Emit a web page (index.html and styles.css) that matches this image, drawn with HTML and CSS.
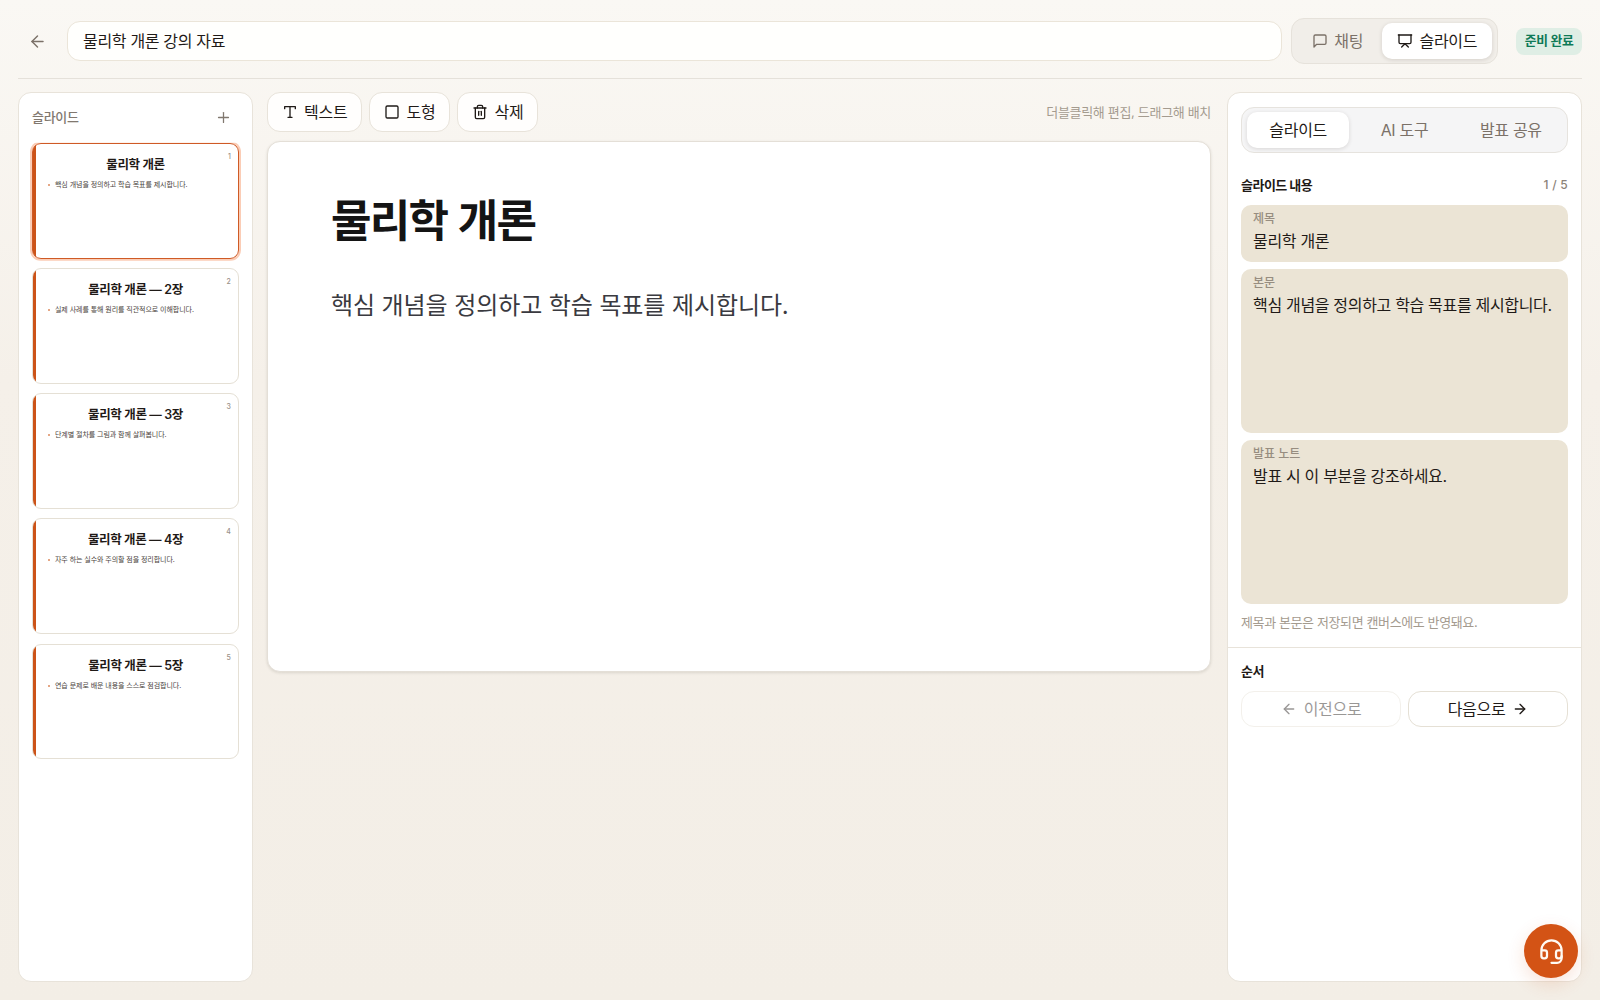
FILE: index.html
```html
<!DOCTYPE html>
<html lang="ko">
<head>
  <meta charset="UTF-8">
  <meta name="viewport" content="width=device-width, initial-scale=1.0">
  <link rel="stylesheet" href="styles.css">
  <title>물리학 개론 강의 자료</title>
</head>
<body>
<header class="topbar">
  <button class="back" aria-label="뒤로">
    <svg class="icon" viewBox="0 0 24 24"><path d="m12 19-7-7 7-7"/><path d="M19 12H5"/></svg>
  </button>
  <div class="doc-title">물리학 개론 강의 자료</div>
  <div class="switch">
    <button class="switch-item">
      <svg class="icon" viewBox="0 0 24 24"><path d="M21 15a2 2 0 0 1-2 2H7l-4 4V5a2 2 0 0 1 2-2h14a2 2 0 0 1 2 2z"/></svg>
      <span class="label">채팅</span>
    </button>
    <button class="switch-item active">
      <svg class="icon" viewBox="0 0 24 24"><path d="M2 3h20"/><path d="M21 3v11a2 2 0 0 1-2 2H5a2 2 0 0 1-2-2V3"/><path d="m7 21 5-5 5 5"/></svg>
      <span class="label">슬라이드</span>
    </button>
  </div>
  <span class="badge">준비 완료</span>
</header>

<main class="workspace">
  <aside class="panel slides">
    <div class="slides-head">
      <span class="label">슬라이드</span>
      <svg class="icon" viewBox="0 0 24 24"><path d="M5 12h14"/><path d="M12 5v14"/></svg>
    </div>
    <div class="thumb selected">
      <span class="thumb-num">1</span>
      <div class="thumb-title">물리학 개론</div>
      <div class="thumb-text">핵심 개념을 정의하고 학습 목표를 제시합니다.</div>
    </div>
    <div class="thumb">
      <span class="thumb-num">2</span>
      <div class="thumb-title">물리학 개론 — 2장</div>
      <div class="thumb-text">실제 사례를 통해 원리를 직관적으로 이해합니다.</div>
    </div>
    <div class="thumb">
      <span class="thumb-num">3</span>
      <div class="thumb-title">물리학 개론 — 3장</div>
      <div class="thumb-text">단계별 절차를 그림과 함께 살펴봅니다.</div>
    </div>
    <div class="thumb">
      <span class="thumb-num">4</span>
      <div class="thumb-title">물리학 개론 — 4장</div>
      <div class="thumb-text">자주 하는 실수와 주의할 점을 정리합니다.</div>
    </div>
    <div class="thumb">
      <span class="thumb-num">5</span>
      <div class="thumb-title">물리학 개론 — 5장</div>
      <div class="thumb-text">연습 문제로 배운 내용을 스스로 점검합니다.</div>
    </div>
  </aside>

  <section class="editor">
    <div class="toolbar">
      <button class="tool">
        <svg class="icon" viewBox="0 0 24 24"><path d="M4 7V4h16v3"/><path d="M9 20h6"/><path d="M12 4v16"/></svg>
        <span class="label">텍스트</span>
      </button>
      <button class="tool">
        <svg class="icon" viewBox="0 0 24 24"><rect x="3" y="3" width="18" height="18" rx="2"/></svg>
        <span class="label">도형</span>
      </button>
      <button class="tool">
        <svg class="icon" viewBox="0 0 24 24"><path d="M3 6h18"/><path d="M19 6v14a2 2 0 0 1-2 2H7a2 2 0 0 1-2-2V6"/><path d="M8 6V4a2 2 0 0 1 2-2h4a2 2 0 0 1 2 2v2"/><path d="M10 11v6"/><path d="M14 11v6"/></svg>
        <span class="label">삭제</span>
      </button>
      <span class="hint">더블클릭해 편집, 드래그해 배치</span>
    </div>
    <div class="canvas">
      <h1 class="canvas-title">물리학 개론</h1>
      <p class="canvas-text">핵심 개념을 정의하고 학습 목표를 제시합니다.</p>
    </div>
  </section>

  <aside class="panel inspector">
    <div class="tabs">
      <button class="tab active"><span class="label">슬라이드</span></button>
      <button class="tab"><span class="label">AI 도구</span></button>
      <button class="tab"><span class="label">발표 공유</span></button>
    </div>
    <div class="section-head">
      <h2 class="section-title">슬라이드 내용</h2>
      <span class="count">1 / 5</span>
    </div>
    <div class="fields">
      <div class="field">
        <div class="field-label">제목</div>
        <div class="field-value">물리학 개론</div>
      </div>
      <div class="field tall">
        <div class="field-label">본문</div>
        <div class="field-value">핵심 개념을 정의하고 학습 목표를 제시합니다.</div>
      </div>
      <div class="field tall">
        <div class="field-label">발표 노트</div>
        <div class="field-value">발표 시 이 부분을 강조하세요.</div>
      </div>
    </div>
    <p class="note">제목과 본문은 저장되면 캔버스에도 반영돼요.</p>
    <div class="order">
      <h2 class="section-title">순서</h2>
      <div class="order-row">
        <button class="move" disabled>
          <svg class="icon" viewBox="0 0 24 24"><path d="m12 19-7-7 7-7"/><path d="M19 12H5"/></svg>
          <span class="label">이전으로</span>
        </button>
        <button class="move">
          <span class="label">다음으로</span>
          <svg class="icon" viewBox="0 0 24 24"><path d="M5 12h14"/><path d="m12 5 7 7-7 7"/></svg>
        </button>
      </div>
    </div>
  </aside>
</main>

<button class="support" aria-label="문의">
  <svg class="icon" viewBox="0 0 24 24"><path d="M3 11h3a2 2 0 0 1 2 2v3a2 2 0 0 1-2 2H5a2 2 0 0 1-2-2v-5a9 9 0 0 1 18 0v5a2 2 0 0 1-2 2h-1a2 2 0 0 1-2-2v-3a2 2 0 0 1 2-2h3"/><path d="M21 16v2a4 4 0 0 1-4 4h-5"/></svg>
</button>
</body>
</html>
```

FILE: styles.css
```css
* {
  box-sizing: border-box;
}
body {
  margin: 0;
  height: 100vh;
  padding: 18px;
  display: flex;
  flex-direction: column;
  overflow: hidden;
  font-family: Inter, "Noto Sans CJK KR", sans-serif;
  font-size: 16px;
  letter-spacing: -0.02em;
  color: #1f1a17;
  background: linear-gradient(180deg, #faf8f4 0%, #f5f0e9 38%, #f3eee6 100%);
}
button {
  font: inherit;
  letter-spacing: inherit;
  color: inherit;
  background: none;
  border: none;
  padding: 0;
  display: flex;
  align-items: center;
  justify-content: center;
}
h1, h2, p {
  margin: 0;
}
.icon {
  width: 16px;
  height: 16px;
  flex: none;
  fill: none;
  stroke: currentColor;
  stroke-width: 2;
  stroke-linecap: round;
  stroke-linejoin: round;
}
.label {
  padding-bottom: 2px;
}

/* top bar */
.topbar {
  display: flex;
  align-items: center;
  height: 61px;
  flex: none;
  padding-bottom: 14px;
  border-bottom: 1px solid #e5e1da;
}
.back {
  width: 39px;
  height: 40px;
  margin-right: 10px;
  color: #7b7168;
}
.back .icon {
  width: 19px;
  height: 19px;
  stroke-width: 1.8;
}
.doc-title {
  flex: 1;
  height: 40px;
  line-height: 38px;
  padding: 0 15px;
  border: 1px solid #ebe5d9;
  border-radius: 13px;
  background: #fffffd;
}
.switch {
  display: flex;
  gap: 4px;
  height: 46px;
  margin-left: 9px;
  padding: 4px 5px;
  border: 1px solid #e6e2db;
  border-radius: 13px;
  background: #f1eee9;
}
.switch-item {
  gap: 6px;
  padding: 0 15.2px;
  border-radius: 10px;
  color: #7b7168;
}
.switch-item.active {
  color: #1f1a17;
  background: #fff;
  box-shadow: 0 1px 4px rgba(40, 30, 20, 0.14);
}
.badge {
  margin-left: 18px;
  height: 27px;
  line-height: 26px;
  padding: 0 8.5px;
  border-radius: 8px;
  font-size: 12.8px;
  font-weight: 600;
  color: #0f7a57;
  background: #dfeee5;
}

/* layout */
.workspace {
  flex: 1;
  min-height: 0;
  display: grid;
  grid-template-columns: 235px 944px 355px;
  column-gap: 14px;
  margin-top: 13px;
}
.panel {
  border: 1px solid #e8e3da;
  border-radius: 13px;
  background: #fff;
}

/* slide list */
.slides {
  display: flex;
  flex-direction: column;
  gap: 9.3px;
  padding: 13px;
}
.slides-head {
  display: flex;
  align-items: center;
  justify-content: space-between;
  height: 22px;
  margin-bottom: 5.5px;
  padding-right: 7px;
  font-size: 13px;
  font-weight: 500;
  color: #81786f;
}
.slides-head .icon {
  width: 17px;
  height: 17px;
  stroke-width: 1.8;
}
.thumb {
  position: relative;
  height: 115.9px;
  padding: 11px 15px;
  border: 1px solid #e5e0d5;
  border-radius: 9px;
  background: linear-gradient(90deg, #cc5318 3px, #fff 3px);
}
.thumb.selected {
  border-color: #cf5a26;
  box-shadow: 0 0 0 2px #fbcdb6;
  clip-path: inset(0 -2px -2px -2px);
}
.thumb-num {
  position: absolute;
  top: 8px;
  right: 7.5px;
  font-size: 7px;
  line-height: 9px;
  font-weight: 500;
  color: #9a9188;
}
.thumb-title {
  font-size: 12.5px;
  line-height: 19px;
  letter-spacing: -0.03em;
  font-weight: 600;
  text-align: center;
}
.thumb-text {
  display: flex;
  align-items: center;
  gap: 5px;
  margin-top: 5px;
  font-size: 7px;
  line-height: 12px;
  letter-spacing: -0.01em;
  color: #4a433d;
}
.thumb-text::before {
  content: "";
  width: 2px;
  height: 2px;
  border-radius: 50%;
  background: #dd8a5c;
}

/* editor */
.toolbar {
  display: flex;
  align-items: center;
  gap: 7px;
  height: 40px;
}
.tool {
  gap: 6px;
  height: 40px;
  padding: 0 14.1px;
  border: 1px solid #e8e3da;
  border-radius: 13px;
  background: #fffefd;
}
.hint {
  margin-left: auto;
  padding-bottom: 2px;
  font-size: 13px;
  letter-spacing: -0.025em;
  color: #a49b8f;
}
.canvas {
  height: 531px;
  margin-top: 9px;
  padding: 48px 63px;
  border: 1px solid #e4dfd7;
  border-radius: 13px;
  background: #fff;
  box-shadow: 0 1px 3px rgba(40, 30, 20, 0.12);
}
.canvas-title {
  font-size: 44px;
  line-height: 62px;
  font-weight: 700;
  letter-spacing: -0.04em;
  word-spacing: 2px;
  color: #141414;
}
.canvas-text {
  margin-top: 35px;
  font-size: 24px;
  line-height: 38px;
  letter-spacing: -0.1px;
  color: #3a3a40;
}

/* inspector */
.inspector {
  margin-left: 2px;
  margin-right: -2px;
  padding: 14px 0;
}
.tabs {
  display: grid;
  grid-template-columns: repeat(3, 1fr);
  gap: 4px;
  height: 46px;
  margin: 0 13px;
  padding: 4px 5px;
  border: 1px solid #e6e3de;
  border-radius: 13px;
  background: #f5f5f6;
}
.tab {
  border-radius: 10px;
  color: #7b7168;
}
.tab.active {
  color: #1f1a17;
  background: #fff;
  box-shadow: 0 1px 4px rgba(40, 30, 20, 0.14);
}
.section-head {
  display: flex;
  align-items: center;
  justify-content: space-between;
  height: 20px;
  margin: 21.5px 13px 10px;
}
.section-title {
  font-size: 13px;
  line-height: 20px;
  font-weight: 700;
  letter-spacing: -0.04em;
}
.count {
  font-size: 12px;
  font-weight: 500;
  letter-spacing: 0.02em;
  color: #8b8278;
}
.fields {
  display: flex;
  flex-direction: column;
  gap: 7px;
  padding: 0 13px;
}
.field {
  height: 57.5px;
  padding: 5px 12px;
  border-radius: 10px;
  background: #ebe4d5;
}
.field.tall {
  height: 164px;
}
.field-label {
  font-size: 12px;
  line-height: 18px;
  font-weight: 500;
  letter-spacing: 0;
  color: #978d80;
}
.field-value {
  line-height: 27px;
  white-space: nowrap;
}
.note {
  margin: 8px 13px 0;
  font-size: 13px;
  line-height: 20px;
  letter-spacing: -0.03em;
  color: #a49b8f;
}
.order {
  margin-top: 15px;
  padding: 13px 13px;
  border-top: 1px solid #e8e3da;
}
.order-row {
  display: grid;
  grid-template-columns: 1fr 1fr;
  gap: 7px;
  margin-top: 9.5px;
}
.move {
  gap: 7px;
  height: 36px;
  border: 1px solid #e5e0d5;
  border-radius: 13px;
  background: #fff;
}
.move:disabled {
  color: inherit;
  opacity: 0.45;
}

/* floating support button */
.support {
  position: fixed;
  right: 22px;
  bottom: 22px;
  width: 54px;
  height: 54px;
  border-radius: 50%;
  color: #fffaf3;
  background: #d35315;
  box-shadow: 0 6px 18px rgba(211, 83, 21, 0.16);
}
.support .icon {
  width: 27px;
  height: 27px;
}
```
